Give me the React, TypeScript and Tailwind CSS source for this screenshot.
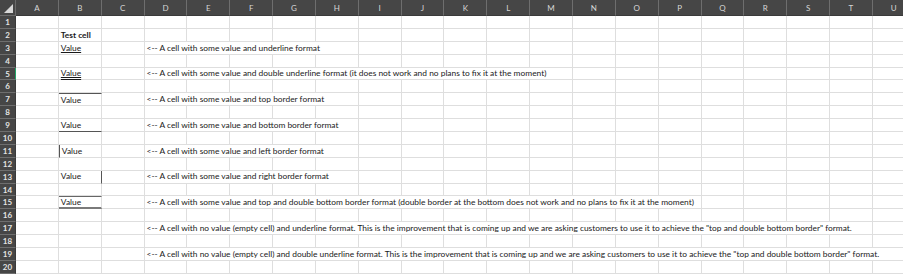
import React from "react";

const cols = ["A", "B", "C", "D", "E", "F", "G", "H", "I", "J", "K", "L", "M", "N", "O", "P", "Q", "R", "S", "T", "U"];

type Row = {
  b?: string;
  bClass?: string;
  note?: string;
  span?: number;
};

const rows: Record<number, Row> = {
  2: { b: "Test cell", bClass: "font-bold" },
  3: { b: "Value", bClass: "underline", note: "<-- A cell with some value and underline format", span: 5 },
  5: {
    b: "Value",
    bClass: "underline decoration-double",
    note: "<-- A cell with some value and double underline format (it does not work and no plans to fix it at the moment)",
    span: 10,
  },
  7: { b: "Value", bClass: "border-t border-t-[#555]", note: "<-- A cell with some value and top border format", span: 5 },
  9: { b: "Value", bClass: "border-b border-b-[#555]", note: "<-- A cell with some value and bottom border format", span: 5 },
  11: { b: "Value", bClass: "border-l border-l-[#555]", note: "<-- A cell with some value and left border format", span: 5 },
  13: { b: "Value", bClass: "border-r border-r-[#555]", note: "<-- A cell with some value and right border format", span: 5 },
  15: {
    b: "Value",
    bClass: "border-t border-t-[#666] border-b-2 border-b-[#7a7a7a]",
    note: "<-- A cell with some value and top and double bottom border format (double border at the bottom does not work and no plans to fix it at the moment)",
    span: 13,
  },
  17: {
    note: '<-- A cell with no value (empty cell) and underline format. This is the improvement that is coming up and we are asking customers to use it to achieve the "top and double bottom border" format.',
    span: 17,
  },
  19: {
    note: '<-- A cell with no value (empty cell) and double underline format. This is the improvement that is coming up and we are asking customers to use it to achieve the "top and double bottom border" format.',
    span: 18,
  },
};

const spanClass: Record<number, string> = {
  5: "col-span-5",
  10: "col-span-10",
  13: "col-span-13",
  17: "col-span-17",
  18: "col-span-18",
};

const cell = "border-r border-b border-[#dedede] h-full";

export default function App() {
  return (
    <div
      className="w-[903px] h-[274px] overflow-hidden bg-white text-[8.4px] text-[#1a1a1a]"
      style={{ fontFamily: "Lato, 'Liberation Sans', sans-serif" }}
    >
      <div className="grid grid-cols-[16px_repeat(21,42.85px)] grid-rows-[16px_repeat(20,12.9px)]">
        <div className="bg-[#464646] border-r border-b border-[#6a6a6a] flex items-end justify-end p-[2px]">
          <svg width="9" height="9" viewBox="0 0 9 9">
            <polygon points="9,0 9,9 0,9" fill="#d8d8d8" />
          </svg>
        </div>
        {cols.map((c) => (
          <div
            key={c}
            className="bg-[#464646] border-r border-[#6e6e6e] border-b border-b-[#3a3a3a] flex items-center justify-center text-[#d6d6d6] text-[8px]"
          >
            {c}
          </div>
        ))}
        {Array.from({ length: 20 }, (_, i) => {
          const n = i + 1;
          const r = rows[n] || {};
          return (
            <React.Fragment key={n}>
              <div
                className={`bg-[#464646] border-b border-[#6e6e6e] flex items-center justify-center text-[#e4e4e4] text-[8px] font-bold ${
                  n === 5 ? "border-r border-r-[#21a366]" : "border-r border-r-[#3a3a3a]"
                }`}
              >
                {n}
              </div>
              <div className={cell} />
              <div className={`${cell} flex items-center pl-[2px] ${r.bClass ?? ""}`}>
                {r.b && <span className="leading-none whitespace-nowrap">{r.b}</span>}
              </div>
              <div className={cell} />
              {r.note ? (
                <div className={`${cell} ${spanClass[r.span!]} flex items-center pl-[2px]`}>
                  <span className="leading-none whitespace-nowrap">{r.note}</span>
                </div>
              ) : null}
              {cols.slice(3 + (r.note ? r.span! : 0)).map((c) => (
                <div key={c} className={cell} />
              ))}
            </React.Fragment>
          );
        })}
      </div>
    </div>
  );
}
